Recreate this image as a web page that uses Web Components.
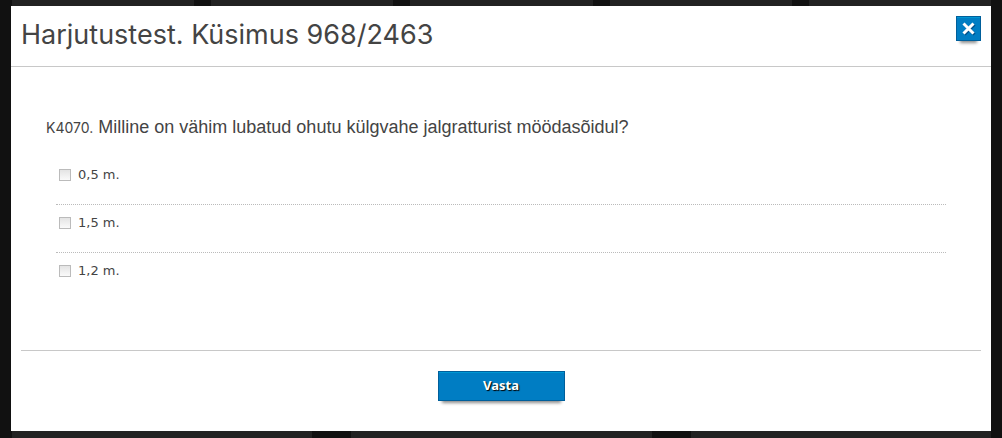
<!DOCTYPE html>
<html lang="et">
<head>
<meta charset="utf-8">
<title>Harjutustest</title>
<style>
  html {
    height: 100%;
  }

  body {
    margin: 0;
    min-height: 100%;
    display: flex;
    flex-direction: column;
    background: #111;
    color: #444;
    font-family: "DejaVu Sans", sans-serif;
  }
</style>
</head>
<body>
<tile-strip count="5" style="--gap: 17px"></tile-strip>

<test-dialog>
  <span slot="title">Harjutustest. Küsimus 968/2463</span>
  <test-question code="K4070.">
    Milline on vähim lubatud ohutu külgvahe jalgratturist möödasõidul?
    <answer-option slot="options" name="a1">0,5 m.</answer-option>
    <answer-option slot="options" name="a2">1,5 m.</answer-option>
    <answer-option slot="options" name="a3">1,2 m.</answer-option>
  </test-question>
  <blue-button slot="actions">Vasta</blue-button>
</test-dialog>

<tile-strip class="rest" count="3" style="--gap: 39px"></tile-strip>

<script>
// Dimmed tiles of the page behind the dialog
class TileStrip extends HTMLElement {
  constructor() {
    super();
    this.root = this.attachShadow({ mode: 'open' });
  }

  connectedCallback() {
    const count = Number(this.getAttribute('count')) || 1;
    this.root.innerHTML = `
      <style>
        :host {
          display: flex;
          gap: var(--gap, 16px);
          min-height: 6px;
          padding: 0 11px 0 12px;
        }

        :host(.rest) {
          flex: 1 0 auto;
        }

        i {
          flex: 1 1 0;
          background: #222;
        }
      </style>
      ${'<i></i>'.repeat(count)}`;
  }
}

class BlueButton extends HTMLElement {
  constructor() {
    super();
    this.root = this.attachShadow({ mode: 'open' });
  }

  connectedCallback() {
    this.root.innerHTML = `
      <style>
        :host {
          display: block;
        }

        button {
          display: flex;
          align-items: center;
          justify-content: center;
          box-sizing: border-box;
          width: 127px;
          height: 30px;
          margin: 0;
          padding: 0 0 2px;
          border: 1px solid #005f9b;
          border-radius: 0;
          background: #007dc3;
          box-shadow: inset 0 1px 0 #0097d3, 0 6px 3px -4px rgba(0, 0, 0, 0.45);
          color: #fff;
          font: bold 13px/20px "Noto Sans", "Open Sans", sans-serif;
          text-shadow: 1px 1px 1px #000;
          cursor: pointer;
        }

        :host([icon]) button {
          width: 25px;
          height: 25px;
          padding: 0;
        }
      </style>
      <button type="button"><slot></slot></button>`;

    const label = this.getAttribute('label');
    if (label) {
      this.root.querySelector('button').setAttribute('aria-label', label);
    }
  }
}

class AnswerOption extends HTMLElement {
  constructor() {
    super();
    this.root = this.attachShadow({ mode: 'open' });
  }

  connectedCallback() {
    this.root.innerHTML = `
      <style>
        :host {
          display: block;
          padding: 8px 3px 19px;
          border-bottom: 1px dotted #bbb;
        }

        :host(:last-of-type) {
          border-bottom: none;
        }

        .row {
          display: flex;
          align-items: center;
          gap: 7px;
        }

        input {
          appearance: none;
          flex: none;
          box-sizing: border-box;
          width: 12px;
          height: 12px;
          margin: 0;
          border: 1px solid #bbb;
          background: linear-gradient(#e4e4e4, #fafafa);
        }

        input:checked {
          background: #007dc3;
        }

        label {
          font-size: 13px;
          line-height: 20px;
        }
      </style>
      <div class="row">
        <input type="checkbox" id="box">
        <label for="box"><slot></slot></label>
      </div>`;

    this.root.querySelector('input').name = this.getAttribute('name') ?? '';
  }
}

class TestQuestion extends HTMLElement {
  constructor() {
    super();
    this.root = this.attachShadow({ mode: 'open' });
  }

  connectedCallback() {
    this.root.innerHTML = `
      <style>
        :host {
          display: block;
          padding: 48px 35px 50px;
        }

        p {
          margin: 0 0 18px;
          font: 18px/24px "Liberation Sans", Arial, sans-serif;
        }

        small {
          font: 14px/20px Inter, "Noto Sans", sans-serif;
        }

        .options {
          padding: 0 10px;
        }
      </style>
      <p><small></small> <slot></slot></p>
      <div class="options"><slot name="options"></slot></div>`;

    this.root.querySelector('small').textContent = this.getAttribute('code');
  }
}

class TestDialog extends HTMLElement {
  constructor() {
    super();
    this.root = this.attachShadow({ mode: 'open' });
  }

  connectedCallback() {
    this.root.innerHTML = `
      <style>
        :host {
          display: block;
          margin: 0 11px;
          background: #fff;
        }

        header {
          display: flex;
          justify-content: space-between;
          align-items: flex-start;
          padding: 10px 10px 12px;
          border-bottom: 1px solid #c8c8c8;
        }

        h1 {
          margin: 0;
          font: 27px/38px Inter, "Noto Sans", sans-serif;
        }

        footer {
          display: flex;
          justify-content: center;
          margin: 0 10px;
          padding: 20px 0 30px;
          border-top: 1px solid #c8c8c8;
        }

        svg {
          display: block;
          filter: drop-shadow(1px 1px 0 #00508a);
        }
      </style>
      <header>
        <h1><slot name="title"></slot></h1>
        <blue-button icon label="Sulge">
          <svg width="13" height="13" viewBox="0 0 13 13" fill="none" stroke="#fff" stroke-width="3">
            <path d="M1.5 1.5l10 10M11.5 1.5l-10 10"/>
          </svg>
        </blue-button>
      </header>
      <slot></slot>
      <footer><slot name="actions"></slot></footer>`;
  }
}

customElements.define('tile-strip', TileStrip);
customElements.define('blue-button', BlueButton);
customElements.define('answer-option', AnswerOption);
customElements.define('test-question', TestQuestion);
customElements.define('test-dialog', TestDialog);
</script>
</body>
</html>
